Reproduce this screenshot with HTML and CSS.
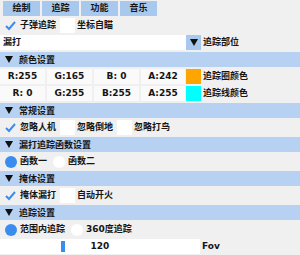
FILE: index.html
```html
<!DOCTYPE html>
<html>
  <head>
    <meta charset="UTF-8" />
    <title>Menu</title>
    <link rel="stylesheet" href="styles.css">
  </head>

  <body>
    <div class="menu">
      <div class="tabs">
        <span class="tab">绘制</span>
        <span class="tab">追踪</span>
        <span class="tab">功能</span>
        <span class="tab">音乐</span>
      </div>

      <div class="row toggles">
        <span class="check on"><span class="box"><svg viewBox="0 0 15 15"><polyline points="3,8 6,11 12,4" /></svg></span>子弹追踪</span>
        <span class="check"><span class="box"></span>坐标自瞄</span>
      </div>

      <div class="row">
        <div class="widget combo">
          <span class="combo-value">漏打</span>
          <span class="combo-arrow"><svg viewBox="0 0 8 7"><polygon points="0,0 8,0 4,7" /></svg></span>
        </div>
        <span class="item-label">追踪部位</span>
      </div>

      <div class="header"><svg viewBox="0 0 8 7"><polygon points="0,0 8,0 4,7" /></svg>颜色设置</div>

      <div class="row">
        <div class="widget color-edit">
          <span class="cell">R:255</span>
          <span class="cell">G:165</span>
          <span class="cell">B: 0</span>
          <span class="cell">A:242</span>
          <span class="swatch" style="background: #ffa500;"></span>
        </div>
        <span class="item-label">追踪圈颜色</span>
      </div>

      <div class="row">
        <div class="widget color-edit">
          <span class="cell">R: 0</span>
          <span class="cell">G:255</span>
          <span class="cell">B:255</span>
          <span class="cell">A:255</span>
          <span class="swatch" style="background: #00ffff;"></span>
        </div>
        <span class="item-label">追踪线颜色</span>
      </div>

      <div class="header"><svg viewBox="0 0 8 7"><polygon points="0,0 8,0 4,7" /></svg>常规设置</div>

      <div class="row toggles">
        <span class="check on"><span class="box"><svg viewBox="0 0 15 15"><polyline points="3,8 6,11 12,4" /></svg></span>忽略人机</span>
        <span class="check"><span class="box"></span>忽略倒地</span>
        <span class="check"><span class="box"></span>忽略打鸟</span>
      </div>

      <div class="header"><svg viewBox="0 0 8 7"><polygon points="0,0 8,0 4,7" /></svg>漏打追踪函数设置</div>

      <div class="row toggles">
        <span class="radio on"><span class="dot"></span>函数一</span>
        <span class="radio"><span class="dot"></span>函数二</span>
      </div>

      <div class="header"><svg viewBox="0 0 8 7"><polygon points="0,0 8,0 4,7" /></svg>掩体设置</div>

      <div class="row toggles">
        <span class="check on"><span class="box"><svg viewBox="0 0 15 15"><polyline points="3,8 6,11 12,4" /></svg></span>掩体漏打</span>
        <span class="check"><span class="box"></span>自动开火</span>
      </div>

      <div class="header"><svg viewBox="0 0 8 7"><polygon points="0,0 8,0 4,7" /></svg>追踪设置</div>

      <div class="row toggles">
        <span class="radio on"><span class="dot"></span>范围内追踪</span>
        <span class="radio"><span class="dot"></span>360度追踪</span>
      </div>

      <div class="row">
        <div class="widget slider">
          <span class="grab" style="left: 61px;"></span>
          <span class="slider-value">120</span>
        </div>
        <span class="item-label">Fov</span>
      </div>
    </div>
  </body>
</html>
```

FILE: styles.css
```css
body {
  margin: 0;
  background-color: #f0f0f0;
  color: #151515;
  font-family: "DejaVu Sans", "Noto Sans CJK SC", sans-serif;
  font-size: 9px;
  font-weight: bold;
}

.menu {
  display: flex;
  flex-direction: column;
  gap: 2px;
  padding-top: 1px;
}

.tabs,
.row {
  display: flex;
  align-items: center;
  height: 15px;
  line-height: 15px;
}

.tabs {
  gap: 2px;
  padding-left: 3px;
}

.tab {
  width: 37px;
  height: 15px;
  text-align: center;
  background-color: #a9c8ee;
}

/* checkboxes and radios */
.toggles {
  padding-left: 3px;
  gap: 4px;
}

.check,
.radio {
  display: flex;
  align-items: center;
  gap: 2px;
}

.box {
  width: 15px;
  height: 15px;
  background-color: #ffffff;
}

.check.on .box {
  background-color: transparent;
}

.box svg {
  display: block;
  width: 15px;
  height: 15px;
}

.box polyline {
  fill: none;
  stroke: #3b8cef;
  stroke-width: 2;
}

.radio .dot {
  width: 12px;
  height: 12px;
  margin: 0 1px 0 2px;
  border-radius: 50%;
  background-color: #ffffff;
}

.radio.on .dot {
  background-color: #3b8cef;
}

/* headers */
.header {
  display: flex;
  align-items: center;
  gap: 6px;
  height: 15px;
  padding-left: 5px;
  background-color: #b6d1f2;
}

.header svg,
.combo-arrow svg {
  width: 8px;
  height: 7px;
}

.header polygon,
.combo-arrow polygon {
  fill: #111111;
}

/* framed widgets */
.widget {
  display: flex;
  width: 201px;
  height: 15px;
}

.item-label {
  margin-left: 2px;
}

.combo {
  background-color: #ffffff;
}

.combo-value {
  flex: 1;
  padding-left: 3px;
}

.combo-arrow {
  display: flex;
  align-items: center;
  justify-content: center;
  width: 15px;
  background-color: #a9c8ee;
}

.color-edit {
  gap: 2px;
}

.cell {
  width: 45px;
  text-align: center;
  background-color: #fafafa;
}

.cell:nth-child(4) {
  width: 44px;
}

.swatch {
  width: 15px;
  margin-left: -1px;
}

.slider {
  position: relative;
  width: 200px;
  background-color: #ffffff;
}

.grab {
  position: absolute;
  top: 2px;
  width: 4px;
  height: 11px;
  background-color: #3b8cef;
}

.slider-value {
  flex: 1;
  text-align: center;
}
```
